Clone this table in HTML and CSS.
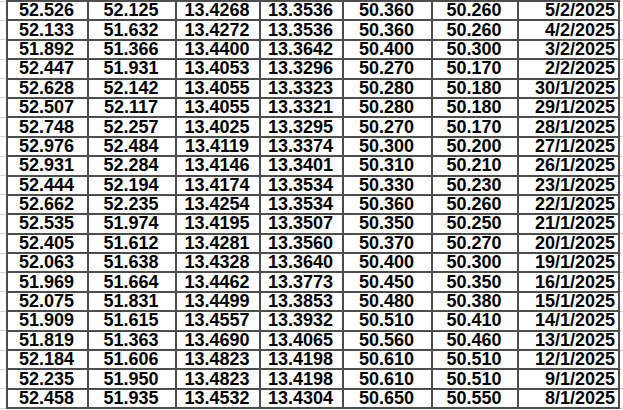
FILE: index.html
```html
<!DOCTYPE html>
<html>
<head>
<meta charset="utf-8">
<link rel="stylesheet" href="styles.css">
</head>
<body>
<table class="rates">
<colgroup>
<col class="c-gut-l"><col class="c1"><col class="c2"><col class="c3"><col class="c4"><col class="c5"><col class="c6"><col class="c7"><col class="c-gut-r">
</colgroup>
<tbody>
<tr><td class="gut"></td><td>52.526</td><td>52.125</td><td>13.4268</td><td>13.3536</td><td>50.360</td><td>50.260</td><td class="date">5/2/2025</td><td class="gut"></td></tr>
<tr><td class="gut"></td><td>52.133</td><td>51.632</td><td>13.4272</td><td>13.3536</td><td>50.360</td><td>50.260</td><td class="date">4/2/2025</td><td class="gut"></td></tr>
<tr><td class="gut"></td><td>51.892</td><td>51.366</td><td>13.4400</td><td>13.3642</td><td>50.400</td><td>50.300</td><td class="date">3/2/2025</td><td class="gut"></td></tr>
<tr><td class="gut"></td><td>52.447</td><td>51.931</td><td>13.4053</td><td>13.3296</td><td>50.270</td><td>50.170</td><td class="date">2/2/2025</td><td class="gut"></td></tr>
<tr><td class="gut"></td><td>52.628</td><td>52.142</td><td>13.4055</td><td>13.3323</td><td>50.280</td><td>50.180</td><td class="date">30/1/2025</td><td class="gut"></td></tr>
<tr><td class="gut"></td><td>52.507</td><td>52.117</td><td>13.4055</td><td>13.3321</td><td>50.280</td><td>50.180</td><td class="date">29/1/2025</td><td class="gut"></td></tr>
<tr><td class="gut"></td><td>52.748</td><td>52.257</td><td>13.4025</td><td>13.3295</td><td>50.270</td><td>50.170</td><td class="date">28/1/2025</td><td class="gut"></td></tr>
<tr><td class="gut"></td><td>52.976</td><td>52.484</td><td>13.4119</td><td>13.3374</td><td>50.300</td><td>50.200</td><td class="date">27/1/2025</td><td class="gut"></td></tr>
<tr><td class="gut"></td><td>52.931</td><td>52.284</td><td>13.4146</td><td>13.3401</td><td>50.310</td><td>50.210</td><td class="date">26/1/2025</td><td class="gut"></td></tr>
<tr><td class="gut"></td><td>52.444</td><td>52.194</td><td>13.4174</td><td>13.3534</td><td>50.330</td><td>50.230</td><td class="date">23/1/2025</td><td class="gut"></td></tr>
<tr><td class="gut"></td><td>52.662</td><td>52.235</td><td>13.4254</td><td>13.3534</td><td>50.360</td><td>50.260</td><td class="date">22/1/2025</td><td class="gut"></td></tr>
<tr><td class="gut"></td><td>52.535</td><td>51.974</td><td>13.4195</td><td>13.3507</td><td>50.350</td><td>50.250</td><td class="date">21/1/2025</td><td class="gut"></td></tr>
<tr><td class="gut"></td><td>52.405</td><td>51.612</td><td>13.4281</td><td>13.3560</td><td>50.370</td><td>50.270</td><td class="date">20/1/2025</td><td class="gut"></td></tr>
<tr><td class="gut"></td><td>52.063</td><td>51.638</td><td>13.4328</td><td>13.3640</td><td>50.400</td><td>50.300</td><td class="date">19/1/2025</td><td class="gut"></td></tr>
<tr><td class="gut"></td><td>51.969</td><td>51.664</td><td>13.4462</td><td>13.3773</td><td>50.450</td><td>50.350</td><td class="date">16/1/2025</td><td class="gut"></td></tr>
<tr><td class="gut"></td><td>52.075</td><td>51.831</td><td>13.4499</td><td>13.3853</td><td>50.480</td><td>50.380</td><td class="date">15/1/2025</td><td class="gut"></td></tr>
<tr><td class="gut"></td><td>51.909</td><td>51.615</td><td>13.4557</td><td>13.3932</td><td>50.510</td><td>50.410</td><td class="date">14/1/2025</td><td class="gut"></td></tr>
<tr><td class="gut"></td><td>51.819</td><td>51.363</td><td>13.4690</td><td>13.4065</td><td>50.560</td><td>50.460</td><td class="date">13/1/2025</td><td class="gut"></td></tr>
<tr><td class="gut"></td><td>52.184</td><td>51.606</td><td>13.4823</td><td>13.4198</td><td>50.610</td><td>50.510</td><td class="date">12/1/2025</td><td class="gut"></td></tr>
<tr><td class="gut"></td><td>52.235</td><td>51.950</td><td>13.4823</td><td>13.4198</td><td>50.610</td><td>50.510</td><td class="date">9/1/2025</td><td class="gut"></td></tr>
<tr><td class="gut"></td><td>52.458</td><td>51.935</td><td>13.4532</td><td>13.4304</td><td>50.650</td><td>50.550</td><td class="date">8/1/2025</td><td class="gut"></td></tr>
</tbody>
</table>
</body>
</html>
```
FILE: styles.css
```css
html, body {
  margin: 0;
  padding: 0;
  background: #ffffff;
}

.rates {
  border-collapse: collapse;
  table-layout: fixed;
  width: 623px;
  font-family: "Liberation Sans", Arial, sans-serif;
  font-weight: bold;
  font-size: 18px;
  color: #000000;
}

.c-gut-l { width: 7px; }
.c1 { width: 81px; }
.c2 { width: 88px; }
.c3 { width: 84px; }
.c4 { width: 83px; }
.c5 { width: 89px; }
.c6 { width: 86px; }
.c7 { width: 101px; }
.c-gut-r { width: 4px; }

.rates tr {
  height: 19.4px;
}

.rates td {
  border: 2px solid #4d4d4d;
  padding: 0 2px 0 0;
  text-align: center;
  line-height: 15px;
  overflow: hidden;
  white-space: nowrap;
}

.rates td.date {
  text-align: right;
  padding-right: 3px;
}

.rates td.gut {
  border-top: 1px solid #d4d4d4;
  border-bottom: 1px solid #d4d4d4;
  border-left: none;
  border-right: none;
  padding: 0;
}
```
